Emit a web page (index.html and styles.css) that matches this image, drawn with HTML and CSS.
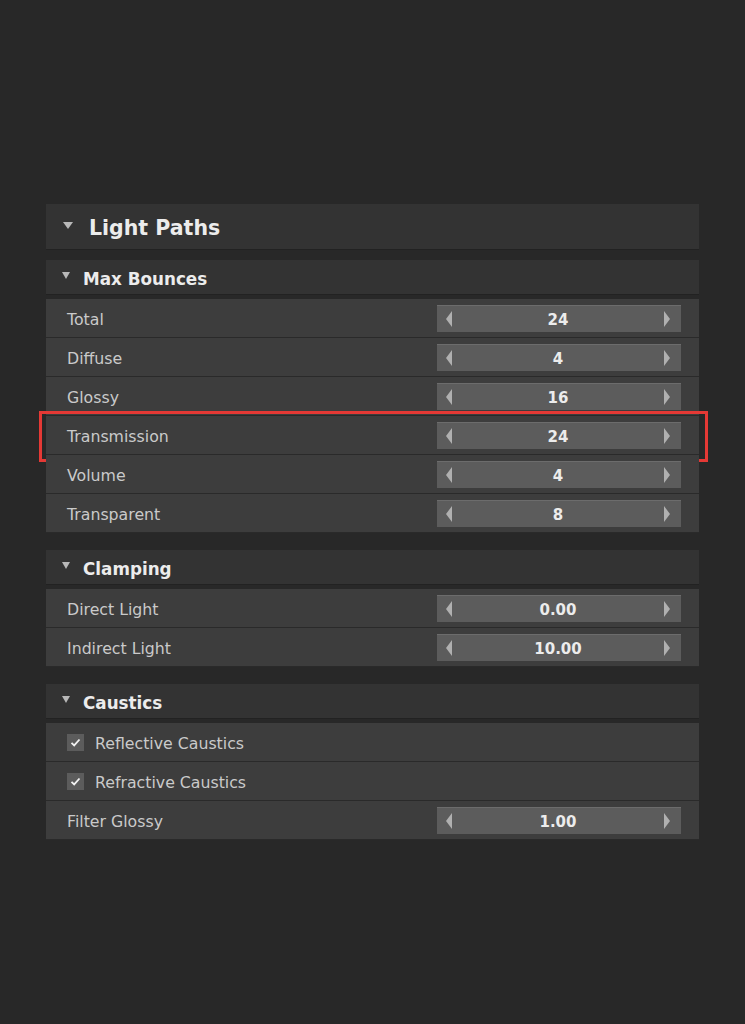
FILE: index.html
```html
<!DOCTYPE html>
<html>
<head>
<meta charset="utf-8">
<link rel="stylesheet" href="styles.css">
</head>
<body>
<div class="panel">
  <div class="main-head"><span class="tri"></span><span class="ht">Light Paths</span></div>

  <section class="sect">
    <div class="sub-head"><span class="tri small"></span><span class="ht">Max Bounces</span></div>
    <div class="rows">
      <div class="row"><span class="label">Total</span><div class="spin"><span class="arr l"></span><span class="val">24</span><span class="arr r"></span></div></div>
      <div class="row"><span class="label">Diffuse</span><div class="spin"><span class="arr l"></span><span class="val">4</span><span class="arr r"></span></div></div>
      <div class="row"><span class="label">Glossy</span><div class="spin"><span class="arr l"></span><span class="val">16</span><span class="arr r"></span></div></div>
      <div class="row hl"><span class="label">Transmission</span><div class="spin"><span class="arr l"></span><span class="val">24</span><span class="arr r"></span></div></div>
      <div class="row"><span class="label">Volume</span><div class="spin"><span class="arr l"></span><span class="val">4</span><span class="arr r"></span></div></div>
      <div class="row"><span class="label">Transparent</span><div class="spin"><span class="arr l"></span><span class="val">8</span><span class="arr r"></span></div></div>
    </div>
  </section>

  <section class="sect">
    <div class="sub-head"><span class="tri small"></span><span class="ht">Clamping</span></div>
    <div class="rows">
      <div class="row"><span class="label">Direct Light</span><div class="spin"><span class="arr l"></span><span class="val">0.00</span><span class="arr r"></span></div></div>
      <div class="row"><span class="label">Indirect Light</span><div class="spin"><span class="arr l"></span><span class="val">10.00</span><span class="arr r"></span></div></div>
    </div>
  </section>

  <section class="sect">
    <div class="sub-head"><span class="tri small"></span><span class="ht">Caustics</span></div>
    <div class="rows">
      <div class="row"><span class="check"><svg width="11" height="9" viewBox="0 0 11 9"><path d="M1.5 4.8 L4.2 7.4 L9.5 1.5" fill="none" stroke="#f2f2f2" stroke-width="1.8"/></svg></span><span class="label">Reflective Caustics</span></div>
      <div class="row"><span class="check"><svg width="11" height="9" viewBox="0 0 11 9"><path d="M1.5 4.8 L4.2 7.4 L9.5 1.5" fill="none" stroke="#f2f2f2" stroke-width="1.8"/></svg></span><span class="label">Refractive Caustics</span></div>
      <div class="row"><span class="label">Filter Glossy</span><div class="spin"><span class="arr l"></span><span class="val">1.00</span><span class="arr r"></span></div></div>
    </div>
  </section>
</div>
</body>
</html>
```

FILE: styles.css
```css
html, body {
  margin: 0;
  padding: 0;
  background: #282828;
}
body {
  font-family: "DejaVu Sans", "Liberation Sans", sans-serif;
  color: #d0d0d0;
  min-height: 1024px;
}
.panel {
  width: 653px;
  margin: 0 0 0 46px;
  padding-top: 204px;
}
.main-head {
  height: 45px;
  background: #333333;
  border-bottom: 1px solid #222222;
  display: flex;
  align-items: center;
  padding-left: 17px;
  gap: 16px;
  font-size: 20.5px;
  font-weight: bold;
  color: #ececec;
  margin-bottom: 10px;
}
.ht {
  padding-top: 3px;
}
.tri {
  width: 0;
  height: 0;
  border-left: 5px solid transparent;
  border-right: 5px solid transparent;
  border-top: 7px solid #b8b8b8;
  margin-top: -3px;
}
.tri.small {
  border-left-width: 4.5px;
  border-right-width: 4.5px;
  border-top-width: 7px;
}
.sect {
  margin-bottom: 17px;
}
.sub-head {
  height: 34px;
  background: #333333;
  border-bottom: 1px solid #222222;
  display: flex;
  align-items: center;
  padding-left: 16px;
  gap: 13px;
  font-size: 16.8px;
  font-weight: bold;
  color: #ececec;
  margin-bottom: 4px;
}
.rows {
  display: flex;
  flex-direction: column;
}
.row {
  position: relative;
  height: 38px;
  background: #3d3d3d;
  border-bottom: 1px solid #2a2a2a;
  display: flex;
  align-items: center;
  padding-left: 21px;
}
.label {
  font-size: 15.75px;
  color: #cacaca;
  flex: 1;
  padding-top: 3px;
}
.hl::after {
  content: "";
  position: absolute;
  left: -7px;
  top: -5px;
  width: 663px;
  height: 45px;
  border: 3px solid #e53935;
  pointer-events: none;
}
.spin {
  width: 244px;
  height: 27px;
  margin-right: 18px;
  background: #5c5c5c;
  border-top: 1px solid #6c6c6c;
  display: flex;
  align-items: center;
  justify-content: space-between;
  padding: 0 11px 0 9px;
  box-sizing: border-box;
}
.val {
  font-size: 15px;
  font-weight: bold;
  color: #ececec;
  padding-top: 2px;
}
.arr {
  width: 0;
  height: 0;
  border-top: 8px solid transparent;
  border-bottom: 8px solid transparent;
}
.arr.l {
  border-right: 6px solid #b0b0b0;
}
.arr.r {
  border-left: 6px solid #b0b0b0;
}
.check {
  width: 17px;
  height: 17px;
  background: #5c5c5c;
  display: flex;
  align-items: center;
  justify-content: center;
  margin-right: 11px;
}
```
